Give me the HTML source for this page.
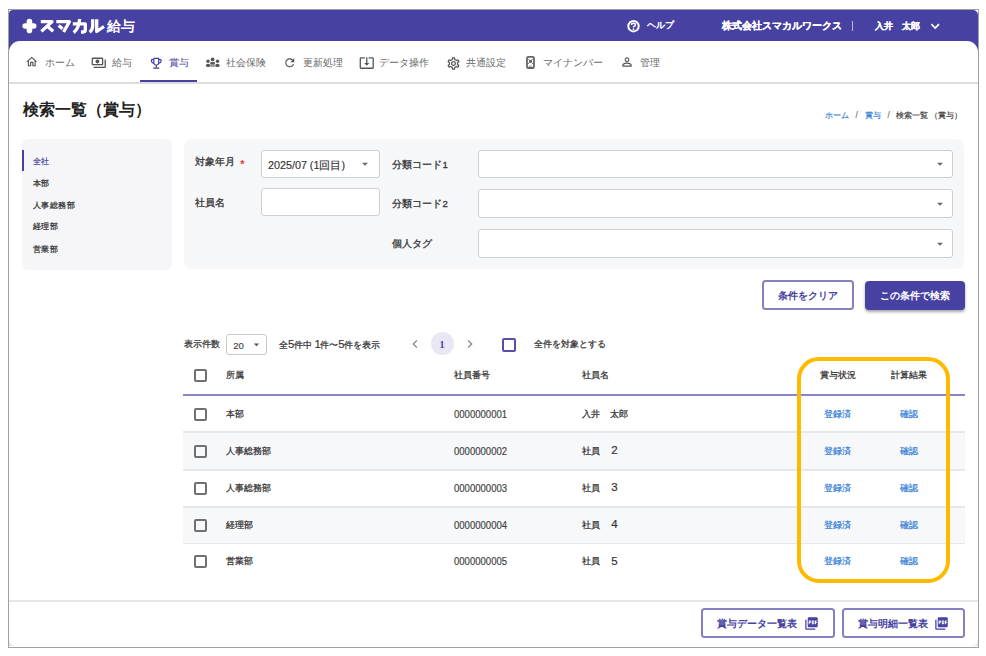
<!DOCTYPE html>
<html lang="ja">
<head>
<meta charset="utf-8">
<style>
html,body{margin:0;padding:0;}
body{width:986px;height:656px;position:relative;overflow:hidden;background:#fff;font-family:"Liberation Sans",sans-serif;color:#333;}
.a{position:absolute;}
.t{position:absolute;line-height:1;white-space:nowrap;}
.frame{position:absolute;left:8px;top:9px;width:969px;height:637px;border:1px solid #a0a0a0;background:#fff;}
.hdr{position:absolute;left:9px;top:10px;width:969px;height:40px;background:#4741a1;border-radius:4px 5px 0 0;}
.nav{position:absolute;left:9px;top:41px;width:969px;height:42px;background:#fff;border-radius:11px 11px 0 0;}
.navline{position:absolute;left:9px;top:82px;width:969px;height:1.5px;background:#dcdcdc;}
.nt{font-size:10px;color:#6a6a6a;}
.ic{position:absolute;fill:#555;}
.box{position:absolute;background:#fff;border:1px solid #cfcfcf;border-radius:3px;box-sizing:border-box;}
.lbl{font-size:9.6px;color:#333;-webkit-text-stroke:0.3px #333;}
.cb{position:absolute;width:13px;height:13px;box-sizing:border-box;border:2.1px solid #707070;border-radius:2px;}
.row{position:absolute;left:183px;width:782px;}
.tt{font-size:9.3px;color:#333;-webkit-text-stroke:0.25px #333;}
.lnk{font-size:9.3px;color:#3b84d8;-webkit-text-stroke:0.25px #3b84d8;}
.dg{font-size:1.2em;letter-spacing:-0.5px;line-height:0;-webkit-text-stroke:0.15px #333;}
.num{font-size:11.5px;color:#444;transform:scaleX(0.83);transform-origin:0 0;-webkit-text-stroke:0.2px #444;}
</style>
</head>
<body>
<div class="frame"></div>
<!-- header -->
<div class="hdr"></div>
<div class="nav"></div>
<div class="navline"></div>

<!-- logo -->
<svg class="a" style="left:0;top:0" width="140" height="42" viewBox="0 0 140 42">
<path d="M29.45 21.6V30.4M25.2 26H33.7" stroke="#fff" stroke-width="5.6" stroke-linecap="round" fill="none"/>
<g stroke="#fff" stroke-width="3.3" fill="none" stroke-linejoin="round">
<path d="M40.8 21.7H52L41.4 31.4"/><path d="M47.3 26.3L53.2 31.2"/>
<path d="M56.3 21.7H69.4L63.6 32"/><path d="M58.6 25.4L62.6 28.8"/>
<path d="M72.8 23.9H85.3V29.8Q85.3 32 83 32H81"/><path d="M79.6 19Q79 28.5 73.6 32.6"/>
<path d="M92.7 19.3V26Q92.6 30 89.6 32.2"/><path d="M96.7 19.3V31.5L104 26.5"/>
</g>
</svg>
<div class="t" style="left:107px;top:19.3px;font-size:14px;font-weight:bold;color:#fff">給与</div>

<!-- header right -->
<svg class="a" style="left:626px;top:18.8px" width="15" height="15" viewBox="0 0 15 15"><circle cx="7.5" cy="7.2" r="5.2" fill="none" stroke="#fff" stroke-width="2"/><path d="M5.6 5.9Q5.6 4.3 7.5 4.3Q9.4 4.3 9.4 5.9Q9.4 7 7.5 7.7V8.6" fill="none" stroke="#fff" stroke-width="1.5"/><circle cx="7.5" cy="10.2" r="0.9" fill="#fff"/></svg>
<div class="t" style="left:646.8px;top:21px;font-size:9.2px;color:#fff;-webkit-text-stroke:0.45px #fff">ヘルプ</div>
<div class="t" style="left:722px;top:21px;font-size:10px;color:#fff;font-weight:bold;-webkit-text-stroke:0.2px #fff">株式会社スマカルワークス</div>
<div class="a" style="left:852px;top:21px;width:1px;height:10px;background:#b9b5dc"></div>
<div class="t" style="left:874.8px;top:21.8px;font-size:9.1px;color:#fff;font-weight:bold;-webkit-text-stroke:0.2px #fff">入井</div>
<div class="t" style="left:902.3px;top:21.8px;font-size:9.1px;color:#fff;font-weight:bold;-webkit-text-stroke:0.2px #fff">太郎</div>
<svg class="a" style="left:928px;top:19px" width="14" height="14" viewBox="0 0 14 14"><path d="M3.4 5.2L7.2 9L11 5.2" fill="none" stroke="#fff" stroke-width="1.7"/></svg>

<!-- nav icons -->
<svg class="ic" style="left:25px;top:55px" width="13.5" height="13.5" viewBox="0 0 24 24"><path d="M12 5.69l5 4.5V18h-2v-6H9v6H7v-7.81l5-4.5M12 3L2 12h3v8h6v-6h2v6h6v-8h3L12 3z"/></svg>
<div class="t nt" style="left:45px;top:57.5px">ホーム</div>
<svg class="ic" style="left:91px;top:55px" width="15.5" height="15.5" viewBox="0 0 24 24"><path d="M19 14V6c0-1.1-.9-2-2-2H3c-1.1 0-2 .9-2 2v8c0 1.1.9 2 2 2h14c1.1 0 2-.9 2-2zm-2 0H3V6h14v8zm-7-7c-1.66 0-3 1.34-3 3s1.34 3 3 3 3-1.34 3-3-1.34-3-3-3zm13 0v11c0 1.1-.9 2-2 2H4v-2h17V7h2z"/></svg>
<div class="t nt" style="left:112px;top:57.5px">給与</div>
<svg class="ic" style="left:148.5px;top:55.5px;fill:#4741a1" width="14.5" height="14.5" viewBox="0 0 24 24"><path d="M19 5h-2V3H7v2H5c-1.1 0-2 .9-2 2v1c0 2.55 1.92 4.63 4.39 4.94.63 1.5 1.98 2.63 3.61 2.96V19H7v2h10v-2h-4v-3.1c1.63-.33 2.98-1.46 3.61-2.96C19.08 12.63 21 10.55 21 8V7c0-1.1-.9-2-2-2zM5 8V7h2v3.82C5.84 10.4 5 9.3 5 8zm7 6c-1.65 0-3-1.35-3-3V5h6v6c0 1.65-1.35 3-3 3zm7-6c0 1.3-.84 2.4-2 2.82V7h2v1z"/></svg>
<div class="t nt" style="left:169px;top:57.5px;color:#4741a1">賞与</div>
<div class="a" style="left:140px;top:80px;width:57px;height:2.3px;background:#4741a1"></div>
<svg class="ic" style="left:200px;top:52px" width="25" height="20" viewBox="0 0 25 20"><g fill="#555"><circle cx="12.6" cy="7.4" r="1.9"/><circle cx="8" cy="9.3" r="1.7"/><circle cx="17.5" cy="9.2" r="1.7"/><rect x="10.4" y="10.4" width="4.4" height="4.6" fill="#9a9a9a"/><ellipse cx="12.6" cy="11.2" rx="2.5" ry="1.1"/><ellipse cx="8.1" cy="13.4" rx="2.2" ry="1.6"/><ellipse cx="17.4" cy="13.4" rx="2.2" ry="1.6"/></g></svg>
<div class="t nt" style="left:226px;top:57.5px">社会保険</div>
<svg class="ic" style="left:282.5px;top:55.5px" width="13.5" height="13.5" viewBox="0 0 24 24"><path d="M17.65 6.35C16.2 4.9 14.21 4 12 4c-4.42 0-7.99 3.58-7.990 8s3.57 8 7.99 8c3.73 0 6.84-2.55 7.73-6h-2.08c-.82 2.33-3.04 4-5.65 4-3.31 0-6-2.69-6-6s2.69-6 6-6c1.66 0 3.14.69 4.22 1.78L13 11h7V4l-2.35 2.35z"/></svg>
<div class="t nt" style="left:303px;top:57.5px">更新処理</div>
<svg class="ic" style="left:359px;top:55px" width="15.5" height="15.5" viewBox="0 0 24 24"><path d="M12 16.5l4-4h-3v-9h-2v9H8l4 4zm9-13h-6v1.99h6v14.03H3V5.49h6V3.5H3c-1.1 0-2 .9-2 2v14c0 1.1.9 2 2 2h18c1.1 0 2-.9 2-2v-14c0-1.1-.9-2-2-2z"/></svg>
<div class="t nt" style="left:379px;top:57.5px">データ操作</div>
<svg class="ic" style="left:445.5px;top:55.5px" width="15" height="15" viewBox="0 0 24 24"><path d="M19.43 12.98c.04-.32.07-.64.07-.98 0-.34-.03-.66-.07-.98l2.11-1.65c.19-.15.24-.42.12-.64l-2-3.46c-.09-.16-.26-.25-.44-.25-.06 0-.12.01-.17.03l-2.49 1c-.52-.4-1.08-.73-1.69-.98l-.38-2.65C14.46 2.18 14.25 2 14 2h-4c-.25 0-.46.18-.49.42l-.38 2.65c-.61.25-1.17.59-1.690.98l-2.49-1c-.06-.02-.12-.03-.18-.03-.17 0-.34.09-.43.25l-2 3.46c-.13.22-.07.49.12.64l2.11 1.65c-.04.32-.07.65-.07.98 0 .33.03.66.07.98l-2.11 1.65c-.19.15-.24.42-.12.64l2 3.46c.09.16.26.25.44.25.06 0 .12-.01.17-.03l2.49-1c.52.4 1.08.73 1.69.98l.38 2.65c.03.24.24.42.49.42h4c.25 0 .46-.18.49-.42l.38-2.65c.61-.25 1.17-.59 1.69-.98l2.49 1c.06.02.12.03.18.03.17 0 .34-.09.43-.25l2-3.46c.12-.22.07-.49-.12-.64l-2.11-1.65zm-1.98-1.71c.04.31.05.52.05.73 0 .21-.02.43-.05.73l-.14 1.13.89.7 1.08.84-.7 1.21-1.27-.51-1.04-.42-.9.68c-.43.32-.84.56-1.25.73l-1.06.43-.16 1.13-.2 1.35h-1.4l-.19-1.35-.16-1.13-1.06-.43c-.43-.18-.83-.41-1.23-.71l-.91-.7-1.06.43-1.27.51-.7-1.21 1.08-.84.89-.7-.14-1.13c-.03-.31-.05-.54-.05-.74s.02-.43.05-.73l.14-1.13-.89-.7-1.08-.84.7-1.21 1.27.51 1.04.42.9-.68c.43-.32.84-.56 1.25-.73l1.06-.43.16-1.13.2-1.35h1.39l.19 1.35.16 1.13 1.06.43c.43.18.83.41 1.23.71l.91.7 1.06-.43 1.27-.51.7 1.21-1.07.85-.89.7.14 1.13zM12 8c-2.21 0-4 1.79-4 4s1.79 4 4 4 4-1.79 4-4-1.79-4-4-4zm0 6c-1.1 0-2-.9-2-2s.9-2 2-2 2 .9 2 2-.9 2-2 2z"/></svg>
<div class="t nt" style="left:466px;top:57.5px">共通設定</div>
<svg class="ic" style="left:524px;top:55px" width="13" height="15" viewBox="0 0 13 15"><rect x="3" y="1.9" width="7" height="11.1" rx="1.3" fill="none" stroke="#666" stroke-width="1.8"/><path d="M4 3.6L6.5 6.3L9 3.6M4 9L6.5 6.3L9 9" fill="none" stroke="#777" stroke-width="1"/><circle cx="6.5" cy="6.3" r="1.4" fill="#5a5a5a"/><path d="M4.3 11.6Q6.5 9.4 8.7 11.6Z" fill="#777"/></svg>
<div class="t nt" style="left:543px;top:57.5px">マイナンバー</div>
<svg class="ic" style="left:619.5px;top:55px" width="14" height="14" viewBox="0 0 24 24"><path d="M12 5.9c1.16 0 2.1.94 2.1 2.1s-.94 2.1-2.1 2.1S9.9 9.16 9.9 8s.94-2.1 2.1-2.1m0 9c2.97 0 6.1 1.46 6.1 2.1v1.1H5.9V17c0-.64 3.13-2.1 6.1-2.1M12 4C9.79 4 8 5.79 8 8s1.79 4 4 4 4-1.79 4-4-1.79-4-4-4zm0 9c-2.67 0-8 1.34-8 4v3h16v-3c0-2.66-5.33-4-8-4z"/></svg>
<div class="t nt" style="left:640px;top:57.5px">管理</div>

<!-- title + breadcrumb -->
<div class="t" style="left:22.5px;top:102px;font-size:16px;font-weight:bold;color:#222">検索一覧（賞与）</div>
<div class="t" style="left:824.5px;top:110.8px;font-size:8.3px;color:#3b84d8;-webkit-text-stroke:0.2px #3b84d8">ホーム</div>
<div class="t" style="left:855.5px;top:110.8px;font-size:8.3px;color:#777;-webkit-text-stroke:0.2px #777">/</div>
<div class="t" style="left:864.5px;top:110.8px;font-size:8.3px;color:#3b84d8;-webkit-text-stroke:0.2px #3b84d8">賞与</div>
<div class="t" style="left:887.5px;top:110.8px;font-size:8.3px;color:#777;-webkit-text-stroke:0.2px #777">/</div>
<div class="t" style="left:896px;top:110.8px;font-size:8.3px;color:#444;-webkit-text-stroke:0.2px #444">検索一覧<span style="margin-left:2px">（</span>賞与）</div>

<!-- sidebar -->
<div class="a" style="left:22px;top:139px;width:150px;height:131px;background:#f6f6f9;border-radius:6px"></div>
<div class="a" style="left:22px;top:150px;width:2px;height:21px;background:#4741a1"></div>
<div class="t" style="left:32.8px;top:157px;font-size:8.4px;letter-spacing:0.5px;color:#4741a1;-webkit-text-stroke:0.2px #4741a1">全社</div>
<div class="t" style="left:32.8px;top:178.8px;font-size:8.4px;letter-spacing:0.5px;color:#333;-webkit-text-stroke:0.25px #333">本部</div>
<div class="t" style="left:32.8px;top:200.8px;font-size:8.4px;letter-spacing:0.5px;color:#333;-webkit-text-stroke:0.25px #333">人事総務部</div>
<div class="t" style="left:32.8px;top:222.4px;font-size:8.4px;letter-spacing:0.5px;color:#333;-webkit-text-stroke:0.25px #333">経理部</div>
<div class="t" style="left:32.8px;top:244.6px;font-size:8.4px;letter-spacing:0.5px;color:#333;-webkit-text-stroke:0.25px #333">営業部</div>

<!-- filter panel -->
<div class="a" style="left:184px;top:138.5px;width:780px;height:130.5px;background:#f6f7f9;border-radius:7px"></div>
<div class="t lbl" style="left:195px;top:157px">対象年月</div>
<div class="t" style="left:240.3px;top:158.8px;font-size:11px;color:#e53935;font-weight:bold">*</div>
<div class="box" style="left:261px;top:149.5px;width:119px;height:28px"></div>
<div class="t" style="left:268px;top:159.5px;font-size:10.75px;color:#333;-webkit-text-stroke:0.15px #333">2025/07 (1回目)</div>
<svg class="a" style="left:358px;top:157px" width="14" height="14" viewBox="0 0 24 24"><path fill="#666" d="M7 10l5 5 5-5z"/></svg>
<div class="t lbl" style="left:195px;top:198px">社員名</div>
<div class="box" style="left:261px;top:188px;width:119px;height:28px"></div>

<div class="t lbl" style="left:391.5px;top:159.5px">分類コード<span style="margin-left:1px">1</span></div>
<div class="t lbl" style="left:391.5px;top:199px">分類コード<span style="margin-left:1px">2</span></div>
<div class="t lbl" style="left:391.5px;top:238.5px">個人タグ</div>
<div class="box" style="left:478px;top:149.5px;width:475px;height:28.5px"></div>
<div class="box" style="left:478px;top:189px;width:475px;height:29px"></div>
<div class="box" style="left:478px;top:229px;width:475px;height:28.5px"></div>
<svg class="a" style="left:932.5px;top:157px" width="14" height="14" viewBox="0 0 24 24"><path fill="#666" d="M7 10l5 5 5-5z"/></svg>
<svg class="a" style="left:932.5px;top:197px" width="14" height="14" viewBox="0 0 24 24"><path fill="#666" d="M7 10l5 5 5-5z"/></svg>
<svg class="a" style="left:932.5px;top:236.5px" width="14" height="14" viewBox="0 0 24 24"><path fill="#666" d="M7 10l5 5 5-5z"/></svg>

<!-- buttons -->
<div class="a" style="left:761.6px;top:280.3px;width:92.4px;height:30.2px;box-sizing:border-box;border:2px solid #8580c0;border-radius:3.5px;background:#fff"></div>
<div class="t" style="left:778px;top:291px;font-size:10px;font-weight:bold;color:#4741a1">条件をクリア</div>
<div class="a" style="left:865px;top:281px;width:99.5px;height:28.5px;border-radius:4px;background:#4741a1;box-shadow:0 2px 3px rgba(0,0,0,.35)"></div>
<div class="t" style="left:880px;top:290.5px;font-size:10px;font-weight:bold;color:#fff">この条件で検索</div>

<!-- table toolbar -->
<div class="t tt" style="left:183.5px;top:340.0px">表示件数</div>
<div class="box" style="left:226px;top:334px;width:40.5px;height:20.5px;border-color:#c9c9c9"></div>
<div class="t" style="left:233.2px;top:340.8px;font-size:9.6px;color:#444;-webkit-text-stroke:0.15px #444">20</div>
<svg class="a" style="left:249.5px;top:337.5px" width="13" height="13" viewBox="0 0 24 24"><path fill="#555" d="M7 10l5 5 5-5z"/></svg>
<div class="t tt" style="left:279px;top:340.0px;font-size:9.4px">全<span class="dg">5</span>件中 <span class="dg">1</span>件〜<span class="dg">5</span>件を表示</div>
<svg class="a" style="left:406.5px;top:336px" width="16" height="16" viewBox="0 0 24 24"><path fill="#8a8a8a" d="M15.41 7.41L14 6l-6 6 6 6 1.41-1.41L10.83 12z"/></svg>
<div class="a" style="left:430.6px;top:332.2px;width:23px;height:23px;border-radius:50%;background:#e9e7f3"></div>
<div class="t" style="left:439.6px;top:340.2px;font-size:10px;color:#4741a1;font-weight:bold;font-family:'Liberation Serif',serif">1</div>
<svg class="a" style="left:461.5px;top:336px" width="16" height="16" viewBox="0 0 24 24"><path fill="#8a8a8a" d="M10 6L8.59 7.41 13.17 12l-4.58 4.59L10 18l6-6z"/></svg>
<div class="cb" style="left:502px;top:338px;border-color:#564fab;width:13.5px;height:13.5px;border-width:2px"></div>
<div class="t tt" style="left:534px;top:340.0px">全件を対象とする</div>

<!-- table -->
<div class="cb" style="left:194.3px;top:369px"></div>
<div class="t tt" style="left:226.2px;top:371.0px">所属</div>
<div class="t tt" style="left:453.5px;top:371.0px">社員番号</div>
<div class="t tt" style="left:582px;top:371.0px">社員名</div>
<div class="t tt" style="left:820px;top:371.0px">賞与状況</div>
<div class="t tt" style="left:891px;top:371.0px">計算結果</div>
<div class="a" style="left:183px;top:394.3px;width:782px;height:1.6px;background:#8a84c8"></div>

<div class="row" style="top:396px;height:35px;background:#fff"></div>
<div class="row" style="top:431px;height:1.5px;background:#e6e7e8"></div>
<div class="row" style="top:432.5px;height:36.5px;background:#f7f8fa"></div>
<div class="row" style="top:469px;height:1.5px;background:#e6e7e8"></div>
<div class="row" style="top:470.5px;height:35.5px;background:#fff"></div>
<div class="row" style="top:506px;height:1.5px;background:#e6e7e8"></div>
<div class="row" style="top:507.5px;height:35px;background:#f7f8fa"></div>
<div class="row" style="top:542.5px;height:1.5px;background:#e6e7e8"></div>

<div class="cb" style="left:194.3px;top:407.5px"></div>
<div class="t tt" style="left:226.2px;top:409.5px">本部</div>
<div class="t num" style="left:453.8px;top:408.5px">0000000001</div>
<div class="t tt" style="left:582px;top:409.5px">入井</div>
<div class="t tt" style="left:610px;top:409.5px">太郎</div>
<div class="t lnk" style="left:823.5px;top:409.5px">登録済</div>
<div class="t lnk" style="left:899.5px;top:409.5px">確認</div>

<div class="cb" style="left:194.3px;top:444.5px"></div>
<div class="t tt" style="left:226.2px;top:446.5px">人事総務部</div>
<div class="t num" style="left:453.8px;top:445.5px">0000000002</div>
<div class="t tt" style="left:582px;top:446.5px">社員</div>
<div class="t" style="left:611.3px;top:445.1px;font-size:11.5px;color:#333;-webkit-text-stroke:0.2px #333">2</div>
<div class="t lnk" style="left:823.5px;top:446.5px">登録済</div>
<div class="t lnk" style="left:899.5px;top:446.5px">確認</div>

<div class="cb" style="left:194.3px;top:481.5px"></div>
<div class="t tt" style="left:226.2px;top:483.5px">人事総務部</div>
<div class="t num" style="left:453.8px;top:482.5px">0000000003</div>
<div class="t tt" style="left:582px;top:483.5px">社員</div>
<div class="t" style="left:611.3px;top:482.1px;font-size:11.5px;color:#333;-webkit-text-stroke:0.2px #333">3</div>
<div class="t lnk" style="left:823.5px;top:483.5px">登録済</div>
<div class="t lnk" style="left:899.5px;top:483.5px">確認</div>

<div class="cb" style="left:194.3px;top:518.5px"></div>
<div class="t tt" style="left:226.2px;top:520.5px">経理部</div>
<div class="t num" style="left:453.8px;top:519.5px">0000000004</div>
<div class="t tt" style="left:582px;top:520.5px">社員</div>
<div class="t" style="left:611.3px;top:519.1px;font-size:11.5px;color:#333;-webkit-text-stroke:0.2px #333">4</div>
<div class="t lnk" style="left:823.5px;top:520.5px">登録済</div>
<div class="t lnk" style="left:899.5px;top:520.5px">確認</div>

<div class="cb" style="left:194.3px;top:555px"></div>
<div class="t tt" style="left:226.2px;top:557.0px">営業部</div>
<div class="t num" style="left:453.8px;top:556.0px">0000000005</div>
<div class="t tt" style="left:582px;top:557.0px">社員</div>
<div class="t" style="left:611.3px;top:555.6px;font-size:11.5px;color:#333;-webkit-text-stroke:0.2px #333">5</div>
<div class="t lnk" style="left:823.5px;top:557.0px">登録済</div>
<div class="t lnk" style="left:899.5px;top:557.0px">確認</div>

<!-- orange highlight -->
<div class="a" style="left:797px;top:357px;width:153px;height:225.5px;box-sizing:border-box;border:4.5px solid #ffba00;border-radius:22px"></div>

<!-- footer -->
<div class="a" style="left:9px;top:600px;width:969px;height:1.5px;background:#e6e6e6"></div>
<div class="a" style="left:701px;top:607.8px;width:134px;height:30.2px;box-sizing:border-box;border:2px solid #8580c0;border-radius:3.5px;background:#fff"></div>
<div class="t" style="left:717px;top:618.5px;font-size:10px;font-weight:bold;color:#4741a1">賞与データ一覧表</div>
<svg class="a" style="left:804px;top:616px" width="15" height="15" viewBox="0 0 24 24"><path fill="#4741a1" d="M20 2H8c-1.1 0-2 .9-2 2v12c0 1.1.9 2 2 2h12c1.1 0 2-.9 2-2V4c0-1.1-.9-2-2-2zm-8.5 7.5c0 .83-.67 1.5-1.5 1.5H9v2H7.5V7H10c.83 0 1.5.67 1.5 1.5v1zm5 2c0 .83-.67 1.5-1.5 1.5h-2.5V7H15c.83 0 1.5.67 1.5 1.5v3zm4-3H19v1h1.5V11H19v2h-1.5V7h3v1.5zM9 9.5h1v-1H9v1zM4 6H2v14c0 1.1.9 2 2 2h14v-2H4V6zm10 5.5h1v-3h-1v3z"/></svg>
<div class="a" style="left:842px;top:607.8px;width:122.5px;height:30.2px;box-sizing:border-box;border:2px solid #8580c0;border-radius:3.5px;background:#fff"></div>
<div class="t" style="left:857.5px;top:618.5px;font-size:10px;font-weight:bold;color:#4741a1">賞与明細一覧表</div>
<svg class="a" style="left:934px;top:616px" width="15" height="15" viewBox="0 0 24 24"><path fill="#4741a1" d="M20 2H8c-1.1 0-2 .9-2 2v12c0 1.1.9 2 2 2h12c1.1 0 2-.9 2-2V4c0-1.1-.9-2-2-2zm-8.5 7.5c0 .83-.67 1.5-1.5 1.5H9v2H7.5V7H10c.83 0 1.5.67 1.5 1.5v1zm5 2c0 .83-.67 1.5-1.5 1.5h-2.5V7H15c.83 0 1.5.67 1.5 1.5v3zm4-3H19v1h1.5V11H19v2h-1.5V7h3v1.5zM9 9.5h1v-1H9v1zM4 6H2v14c0 1.1.9 2 2 2h14v-2H4V6zm10 5.5h1v-3h-1v3z"/></svg>
<div class="a" style="left:9px;top:640px;width:6px;height:6px;background:radial-gradient(circle at 100% 0,#fff 5.2px,#e6e6e6 6.2px)"></div>
<div class="a" style="left:972px;top:640px;width:6px;height:6px;background:radial-gradient(circle at 0 0,#fff 5.2px,#e6e6e6 6.2px)"></div>
</body>
</html>
